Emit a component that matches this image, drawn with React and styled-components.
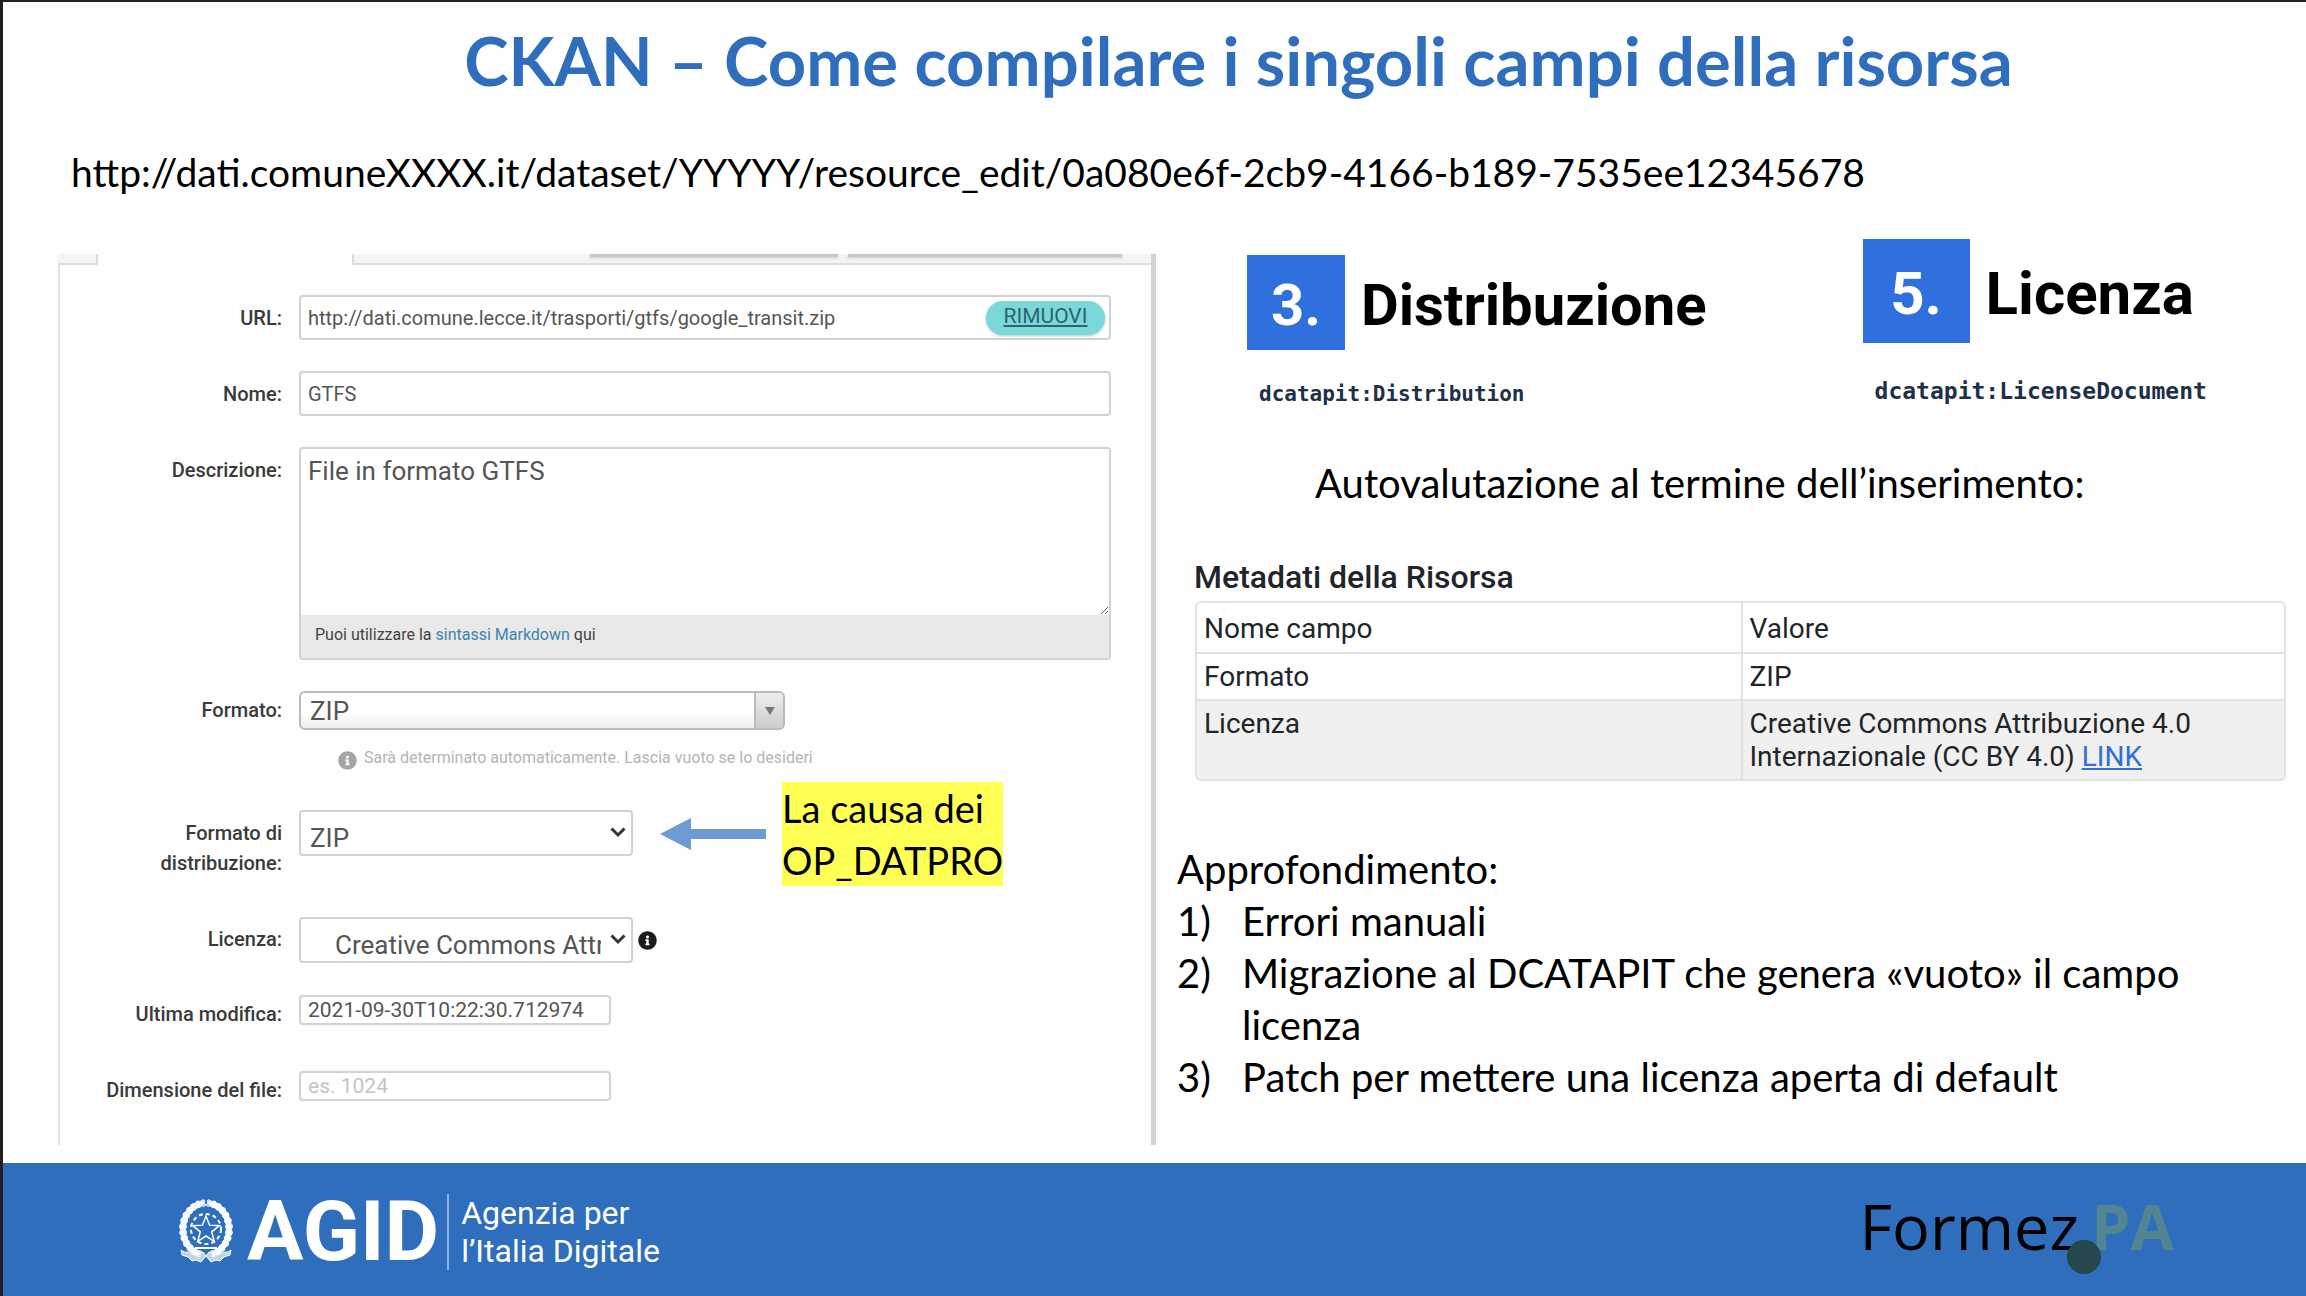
import React, { useState } from "react";
import styled, { createGlobalStyle } from "styled-components";
import { FaInfoCircle } from "react-icons/fa";

const slideFont = `Lato, "Open Sans", sans-serif`;
const formFont = `Roboto, "Open Sans", sans-serif`;

const GlobalStyle = createGlobalStyle`
  * {
    box-sizing: border-box;
  }

  body {
    margin: 0;
    background: #fefefe;
    color: #000;
    font-family: ${slideFont};
  }
`;

const Slide = styled.div`
  display: flex;
  flex-direction: column;
  min-height: 100vh;
  border-top: 2px solid #231f20;
  border-left: 3px solid #231f20;
`;

const Header = styled.header`
  padding: 22px 0 0 68px;
`;

const Title = styled.h1`
  margin: 0;
  padding-left: 100px;
  text-align: center;
  font-size: 67px;
  line-height: 72px;
  font-weight: bold;
  color: #2e6ebc;
`;

const Address = styled.p`
  margin: 54px 0 0;
  font-size: 39px;
  line-height: 44px;
`;

const Main = styled.main`
  flex: 1;
  display: grid;
  grid-template-columns: 1098fr 1150fr;
  padding: 45px 0 18px 55px;
`;

const FormPanel = styled.form`
  margin-top: 15px;
  border-right: 5px solid #d3d3d3;
  font-family: ${formFont};
`;

const TabStrip = styled.div`
  display: flex;
  height: 11px;
`;

const TabEdge = styled.div`
  width: 40px;
  background: #f4f4f4;
  border-right: 2px solid #ddd;
  border-bottom: 2px solid #ddd;
`;

const TabBar = styled.div`
  flex: 1;
  display: flex;
  justify-content: flex-end;
  gap: 10px;
  margin-left: 254px;
  padding-right: 29px;
  background: #f4f4f4;
  border-left: 2px solid #ddd;
  border-bottom: 2px solid #ddd;
`;

const TabShadow = styled.div`
  width: ${(props) => props.$width}px;
  height: 3px;
  background: #c8c8c8;
  box-shadow: 0 1px 3px #c8c8c8;
`;

const Fields = styled.div`
  display: flex;
  flex-direction: column;
  gap: 31px;
  height: calc(100% - 11px);
  padding: 30px 40px 27px 0;
  border-left: 2px solid #e2e2e2;
`;

const Row = styled.div`
  display: grid;
  grid-template-columns: 222px 1fr;
  column-gap: 17px;
  align-items: start;
`;

const Label = styled.label`
  padding: ${(props) => (props.$compact ? "4px 0 11px" : "8px 0 7px")};
  text-align: right;
  font-size: 20px;
  line-height: 30px;
  font-weight: 500;
  color: #3a3a3a;
`;

const InputBox = styled.div`
  display: flex;
  align-items: center;
  height: 45px;
  padding-right: 4px;
  border: 2px solid #d2d2d2;
  border-radius: 4px;
  background: #fff;
`;

const Input = styled.input`
  flex: 1;
  min-width: 0;
  padding: 0 7px;
  border: 0;
  outline: 0;
  background: none;
  font-family: inherit;
  font-size: 20px;
  line-height: 24px;
  color: #555;

  &::placeholder {
    color: #c4c4c4;
  }
`;

const SmallInputBox = styled(InputBox)`
  width: 312px;
  height: 30px;

  ${Input} {
    font-size: 21px;
  }
`;

const RemoveButton = styled.button`
  width: 119px;
  height: 34px;
  padding: 0 0 4px;
  border: 0;
  border-radius: 17px;
  background: #7cd8d8;
  box-shadow: 0 1px 3px #9fcfcf;
  font-family: inherit;
  font-size: 21px;
  line-height: 28px;
  color: #2b6470;
  text-decoration: underline;
`;

const Editor = styled.div`
  height: 213px;
  display: flex;
  flex-direction: column;
  border: 2px solid #d2d2d2;
  border-radius: 4px;
  overflow: hidden;
`;

const TextArea = styled.textarea`
  flex: 1;
  padding: 5px 7px;
  border: 0;
  outline: 0;
  background: #fff;
  font-family: inherit;
  font-size: 26px;
  line-height: 34px;
  color: #555;
`;

const EditorFooter = styled.div`
  height: 43px;
  padding: 0 14px;
  background: #e9e9e9;
  font-size: 16px;
  line-height: 40px;
  color: #444;
`;

const EditorLink = styled.a`
  color: #3a87ad;
  text-decoration: none;
`;

const SelectBox = styled.div`
  position: relative;
  width: ${(props) => (props.$wide ? 486 : 334)}px;
`;

const Select = styled.select`
  display: block;
  width: 100%;
  height: 46px;
  padding: 10px 30px 0 ${(props) => (props.$indent ? 34 : 9)}px;
  appearance: none;
  border: 2px solid #d2d2d2;
  border-radius: 4px;
  background: #fff;
  font-family: inherit;
  font-size: 26px;
  color: #555;
`;

const ChosenSelect = styled(Select)`
  height: 39px;
  padding: 0 34px 0 9px;
  border-color: #bbb;
  border-radius: 6px;
  background: linear-gradient(#fff 50%, #eee);
`;

// Sits on top of the native control's right end
const ChosenArrow = styled.span`
  position: absolute;
  top: 2px;
  right: 2px;
  bottom: 2px;
  width: 29px;
  display: flex;
  align-items: center;
  justify-content: center;
  border-left: 2px solid #bbb;
  border-radius: 0 4px 4px 0;
  background: linear-gradient(#eee, #ccc);
  pointer-events: none;
`;

const Chevron = styled.svg`
  position: absolute;
  top: 16px;
  right: 7px;
  width: 16px;
  height: 12px;
  pointer-events: none;
`;

const Hint = styled.p`
  display: flex;
  align-items: center;
  gap: 7px;
  margin: 0;
  padding: 16px 0 9px 39px;
  font-size: 16px;
  line-height: 24px;
  color: #b5b5b5;
`;

const HintIcon = styled(FaInfoCircle)`
  width: 19px;
  height: 19px;
  margin-top: 5px;
  color: #a5a5a5;
`;

const Inline = styled.div`
  display: flex;
  align-items: center;
  gap: 5px;
  min-height: 48px;
`;

const InfoIcon = styled(FaInfoCircle)`
  width: 19px;
  height: 19px;
  color: #1c1c1c;
`;

// Annotation laid over the form, next to the field that it explains
const Callout = styled.div`
  position: absolute;
  top: -28px;
  left: 361px;
  display: flex;
  align-items: center;
  gap: 16px;
`;

const Arrow = styled.svg`
  width: 106px;
  height: 32px;
`;

const Highlight = styled.p`
  margin: 0;
  background: #ffff54;
  font-family: ${slideFont};
  font-size: 38px;
  line-height: 52px;
  white-space: nowrap;
`;

const Notes = styled.section`
  padding: 0 20px 0 21px;
`;

const Topics = styled.div`
  display: grid;
  grid-template-columns: 615fr 423fr;
  align-items: start;
  padding-left: 70px;
`;

const Topic = styled.article`
  margin-top: ${(props) => (props.$large ? 0 : 16)}px;
`;

const TopicHead = styled.div`
  display: flex;
  align-items: center;
  gap: 16px;
`;

const TopicNumber = styled.span`
  display: flex;
  align-items: center;
  justify-content: center;
  width: ${(props) => (props.$large ? 107 : 98)}px;
  height: ${(props) => (props.$large ? 104 : 95)}px;
  padding-top: 4px;
  background: #3070de;
  font-family: ${formFont};
  font-size: ${(props) => (props.$large ? 60 : 58)}px;
  font-weight: bold;
  color: #fff;
`;

const TopicTitle = styled.h2`
  margin: 0;
  padding-top: 4px;
  font-family: ${formFont};
  font-size: ${(props) => (props.$large ? 60 : 58)}px;
  font-weight: bold;
`;

const TopicCode = styled.code`
  display: block;
  margin: ${(props) => (props.$large ? 34 : 30)}px 0 0 12px;
  font-family: "DejaVu Sans Mono", "Liberation Mono", monospace;
  font-size: ${(props) => (props.$large ? 23 : 21)}px;
  line-height: 28px;
  font-weight: bold;
  color: #1d3048;
`;

const Lead = styled.p`
  margin: 49px 0 0;
  padding-left: 138px;
  font-size: 40px;
  line-height: 52px;
`;

const TableTitle = styled.h3`
  margin: 48px 0 4px;
  padding-left: 17px;
  font-family: ${formFont};
  font-size: 32px;
  line-height: 40px;
  font-weight: 500;
  color: #212529;
`;

const MetaTable = styled.table`
  width: calc(100% - 18px);
  margin-left: 18px;
  border: 2px solid #e2e2e2;
  border-radius: 6px;
  border-spacing: 0;
  overflow: hidden;
  table-layout: fixed;
  font-family: ${formFont};
  font-size: 28px;
  line-height: 33px;
  color: #212529;
`;

const Cell = styled.td`
  padding: 6px 7px;
  vertical-align: top;
  text-align: left;
  font-weight: normal;

  thead & {
    padding: 9px 7px 7px;
  }

  & + & {
    border-left: 2px solid #e2e2e2;
  }
`;

const MetaRow = styled.tr`
  background: ${(props) => (props.$shaded ? "#f0f0f0" : "#fff")};

  tbody & ${Cell} {
    border-top: 2px solid #e2e2e2;
  }
`;

const TableLink = styled.a`
  color: #2f6fd6;
`;

const Insights = styled.section`
  margin-top: 62px;
  font-size: 40px;
  line-height: 52px;
`;

const InsightTitle = styled.p`
  margin: 0;
`;

const InsightList = styled.ol`
  margin: 0;
  padding: 0;
  list-style: none;
  counter-reset: insight;
`;

const InsightItem = styled.li`
  display: grid;
  grid-template-columns: 65px 1fr;
  padding-right: 90px;
  counter-increment: insight;

  &::before {
    content: counter(insight) ")";
  }
`;

const Footer = styled.footer`
  display: flex;
  align-items: center;
  justify-content: space-between;
  height: 133px;
  padding: 0 132px 0 175px;
  background: #2e6ebc;
`;

const Agid = styled.div`
  display: flex;
  align-items: center;
  margin-top: 4px;
  color: #fff;
  font-family: ${formFont};
`;

const Emblem = styled.svg`
  width: 56px;
  height: 66px;
`;

const AgidName = styled.strong`
  margin-left: 13px;
  font-size: 84px;
  line-height: 64px;
`;

const AgidText = styled.span`
  margin-left: 8px;
  padding-left: 12px;
  border-left: 2px solid #8fb3dd;
  font-size: 32px;
  line-height: 38px;
`;

const Formez = styled.div`
  display: flex;
  align-items: center;
  margin-bottom: 8px;
  font-family: "Open Sans", sans-serif;
  font-size: 63px;
  line-height: 64px;
`;

const FormezDot = styled.span`
  width: 34px;
  height: 34px;
  margin: 62px -10px 0 -12px;
  border-radius: 50%;
  background: #26474b;
  z-index: 1;
`;

const FormezPa = styled.strong`
  color: #528491;
`;

const metadata = [
  { name: "Formato", value: "ZIP" },
  {
    name: "Licenza",
    value: "Creative Commons Attribuzione 4.0 Internazionale (CC BY 4.0)",
    link: "LINK",
    shaded: true,
  },
];

const insights = [
  "Errori manuali",
  "Migrazione al DCATAPIT che genera «vuoto» il campo licenza",
  "Patch per mettere una licenza aperta di default",
];

const starPoints = (cx, cy, r, inner) =>
  Array.from({ length: 10 }, (_, i) => {
    const radius = i % 2 === 0 ? r : inner;
    const a = (Math.PI / 5) * i - Math.PI / 2;
    return `${cx + radius * Math.cos(a)},${cy + radius * Math.sin(a)}`;
  }).join(" ");

const ChevronIcon = () => (
  <Chevron viewBox="0 0 16 12" fill="none" stroke="#333" strokeWidth="3">
    <path d="M1.5 2.5 8 9l6.5-6.5" />
  </Chevron>
);

const RepublicEmblem = () => {
  const leaves = Array.from({ length: 12 }, (_, i) => 114 + i * 13);

  return (
    <Emblem viewBox="0 0 56 66" fill="none" stroke="#fff">
      {[1, -1].map((side) => (
        <g key={side} transform={side === 1 ? undefined : "translate(56 0) scale(-1 1)"}>
          {leaves.map((deg) => {
            const a = (deg * Math.PI) / 180;
            const x = 28 + 23 * Math.cos(a);
            const y = 30 + 26 * Math.sin(a);
            return (
              <g key={deg} transform={`translate(${x} ${y}) rotate(${deg + 90})`}>
                <ellipse rx="5" ry="2" transform="rotate(32)" fill="#fff" fillOpacity="0.6" strokeWidth="0.8" />
                <ellipse rx="5" ry="2" transform="rotate(-32)" fill="#fff" fillOpacity="0.8" strokeWidth="0.8" />
              </g>
            );
          })}
          <path d="M3 51c5 4 8 1 12 3s7 1 10-1l3 4-5 6-5-2-4 1-4-4-6-2z" fill="#fff" fillOpacity="0.7" />
        </g>
      ))}
      <circle cx="28" cy="30" r="15" strokeWidth="2" strokeDasharray="4 3" />
      <polygon points={starPoints(28, 31, 14, 6)} fill="#2e6ebc" strokeWidth="1.5" />
      <path d="M17 49h22" strokeWidth="2" />
    </Emblem>
  );
};

const ResourceForm = () => {
  const [url, setUrl] = useState(
    "http://dati.comune.lecce.it/trasporti/gtfs/google_transit.zip"
  );
  const [name, setName] = useState("GTFS");
  const [description, setDescription] = useState("File in formato GTFS");
  const [modified, setModified] = useState("2021-09-30T10:22:30.712974");
  const [size, setSize] = useState("");

  return (
    <FormPanel onSubmit={(e) => e.preventDefault()}>
      <TabStrip>
        <TabEdge />
        <TabBar>
          <TabShadow $width={248} />
          <TabShadow $width={274} />
        </TabBar>
      </TabStrip>
      <Fields>
        <Row>
          <Label htmlFor="url">URL:</Label>
          <InputBox>
            <Input id="url" value={url} onChange={(e) => setUrl(e.target.value)} />
            <RemoveButton type="button" onClick={() => setUrl("")}>
              RIMUOVI
            </RemoveButton>
          </InputBox>
        </Row>
        <Row>
          <Label htmlFor="name">Nome:</Label>
          <InputBox>
            <Input id="name" value={name} onChange={(e) => setName(e.target.value)} />
          </InputBox>
        </Row>
        <Row>
          <Label htmlFor="description">Descrizione:</Label>
          <Editor>
            <TextArea
              id="description"
              value={description}
              onChange={(e) => setDescription(e.target.value)}
            />
            <EditorFooter>
              Puoi utilizzare la <EditorLink href="#markdown">sintassi Markdown</EditorLink> qui
            </EditorFooter>
          </Editor>
        </Row>
        <Row>
          <Label htmlFor="format" $compact>Formato:</Label>
          <div>
            <SelectBox $wide>
              <ChosenSelect id="format">
                <option>ZIP</option>
              </ChosenSelect>
              <ChosenArrow>
                <svg width="10" height="8" viewBox="0 0 10 8" fill="#777">
                  <path d="M0 0h10L5 8z" />
                </svg>
              </ChosenArrow>
            </SelectBox>
            <Hint>
              <HintIcon />
              Sarà determinato automaticamente. Lascia vuoto se lo desideri
            </Hint>
          </div>
        </Row>
        <Row>
          <Label htmlFor="distribution">Formato di distribuzione:</Label>
          <SelectBox>
            <Select id="distribution">
              <option>ZIP</option>
            </Select>
            <ChevronIcon />
            <Callout>
              <Arrow viewBox="0 0 106 32" fill="#6b9bd2">
                <path d="M0 16 31 0v11h75v10H31v11z" />
              </Arrow>
              <Highlight>
                La causa dei
                <br />
                OP_DATPRO
              </Highlight>
            </Callout>
          </SelectBox>
        </Row>
        <Row>
          <Label htmlFor="license">Licenza:</Label>
          <Inline>
            <SelectBox>
              <Select id="license" $indent>
                <option>Creative Commons Attribuzione 4.0</option>
              </Select>
              <ChevronIcon />
            </SelectBox>
            <InfoIcon />
          </Inline>
        </Row>
        <Row>
          <Label htmlFor="modified" $compact>Ultima modifica:</Label>
          <SmallInputBox>
            <Input id="modified" value={modified} onChange={(e) => setModified(e.target.value)} />
          </SmallInputBox>
        </Row>
        <Row>
          <Label htmlFor="size" $compact>Dimensione del file:</Label>
          <SmallInputBox>
            <Input
              id="size"
              placeholder="es. 1024"
              value={size}
              onChange={(e) => setSize(e.target.value)}
            />
          </SmallInputBox>
        </Row>
      </Fields>
    </FormPanel>
  );
};

const App = () => (
  <>
    <GlobalStyle />
    <Slide>
      <Header>
        <Title>CKAN – Come compilare i singoli campi della risorsa</Title>
        <Address>
          http://dati.comuneXXXX.it/dataset/YYYYY/resource_edit/0a080e6f-2cb9-4166-b189-7535ee12345678
        </Address>
      </Header>
      <Main>
        <ResourceForm />
        <Notes>
          <Topics>
            <Topic>
              <TopicHead>
                <TopicNumber>3.</TopicNumber>
                <TopicTitle>Distribuzione</TopicTitle>
              </TopicHead>
              <TopicCode>dcatapit:Distribution</TopicCode>
            </Topic>
            <Topic $large>
              <TopicHead>
                <TopicNumber $large>5.</TopicNumber>
                <TopicTitle $large>Licenza</TopicTitle>
              </TopicHead>
              <TopicCode $large>dcatapit:LicenseDocument</TopicCode>
            </Topic>
          </Topics>
          <Lead>Autovalutazione al termine dell’inserimento:</Lead>
          <TableTitle>Metadati della Risorsa</TableTitle>
          <MetaTable>
            <thead>
              <MetaRow>
                <Cell as="th">Nome campo</Cell>
                <Cell as="th">Valore</Cell>
              </MetaRow>
            </thead>
            <tbody>
              {metadata.map((item) => (
                <MetaRow key={item.name} $shaded={item.shaded}>
                  <Cell>{item.name}</Cell>
                  <Cell>
                    {item.value} {item.link && <TableLink href="#license">{item.link}</TableLink>}
                  </Cell>
                </MetaRow>
              ))}
            </tbody>
          </MetaTable>
          <Insights>
            <InsightTitle>Approfondimento:</InsightTitle>
            <InsightList>
              {insights.map((text) => (
                <InsightItem key={text}>{text}</InsightItem>
              ))}
            </InsightList>
          </Insights>
        </Notes>
      </Main>
      <Footer>
        <Agid>
          <RepublicEmblem />
          <AgidName>AGID</AgidName>
          <AgidText>
            Agenzia per
            <br />
            l’Italia Digitale
          </AgidText>
        </Agid>
        <Formez>
          <span>Formez</span>
          <FormezDot />
          <FormezPa>PA</FormezPa>
        </Formez>
      </Footer>
    </Slide>
  </>
);

export default App;
